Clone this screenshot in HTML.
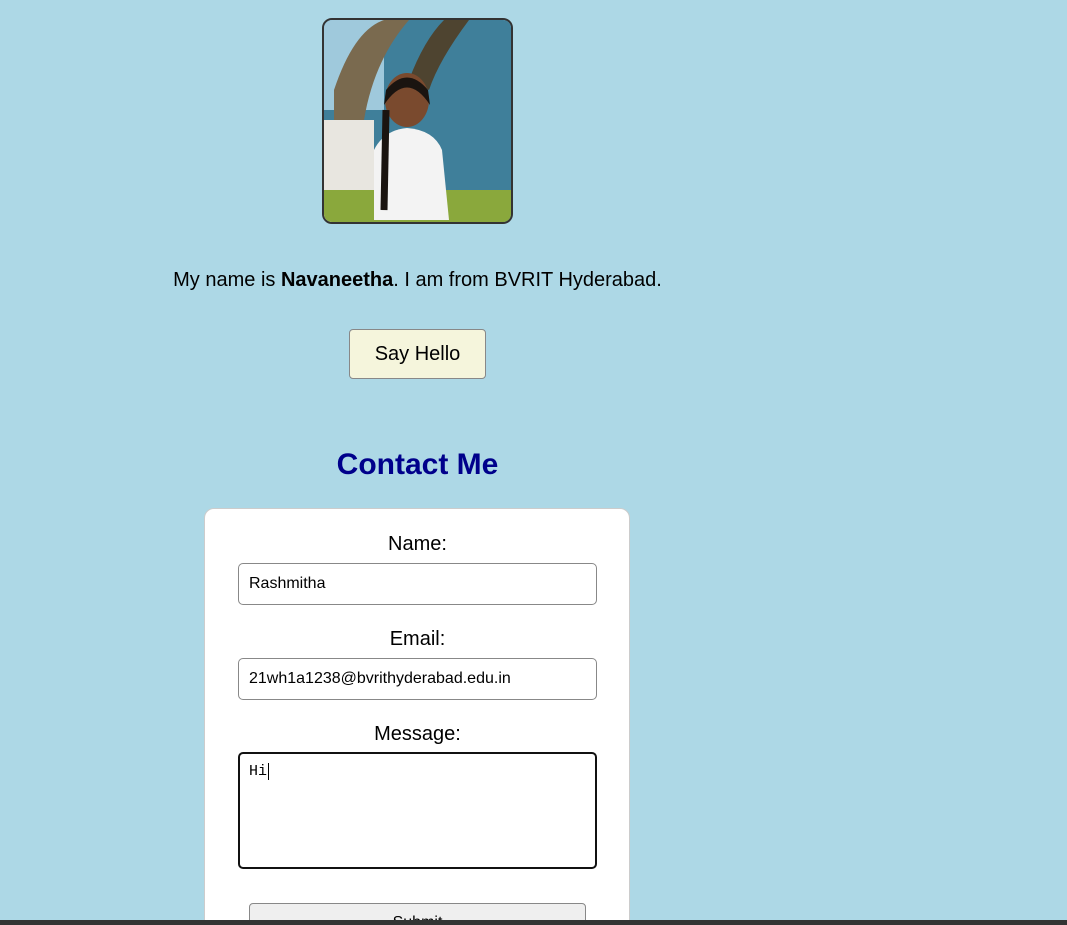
<!DOCTYPE html>
<html><head><meta charset="utf-8"><style>
html,body{margin:0;padding:0;width:1067px;height:925px;overflow:hidden;}
body{background:#add8e6;font-family:"Liberation Sans",Arial,sans-serif;position:relative;}
.photo{position:absolute;left:322px;top:18px;width:187px;height:202px;border:2px solid #333;border-radius:10px;overflow:hidden;}
.intro{position:absolute;left:0;width:835px;top:269px;text-align:center;font-size:20px;color:#000;}
.hello{position:absolute;left:349px;top:329px;width:137px;height:50px;box-sizing:border-box;background:#f5f5dc;border:1px solid #888;border-radius:4px;font-size:20px;text-align:center;line-height:48px;}
h2{position:absolute;left:0;width:835px;top:448px;margin:0;text-align:center;font-size:30px;color:#00008b;font-weight:bold;}
.card{position:absolute;left:204px;top:508px;width:426px;height:450px;background:#fff;border-radius:10px;border:1px solid #ccc;box-sizing:border-box;}
.lbl{position:absolute;left:0;width:425px;text-align:center;font-size:20px;}
.inp{position:absolute;left:33px;width:359px;height:42px;box-sizing:border-box;border:1px solid #888;border-radius:5px;font-size:16px;padding-left:10px;line-height:40px;}
.ta{position:absolute;left:33px;top:243px;width:359px;height:117px;box-sizing:border-box;border:2px solid #111;border-radius:5px;font-family:"Liberation Mono",monospace;font-size:15px;padding:9px 9px;}
.sub{position:absolute;left:44px;top:394px;width:337px;height:40px;box-sizing:border-box;background:#efefef;border:1px solid #888;border-radius:4px;text-align:center;font-size:16px;line-height:38px;}
.bar{position:absolute;left:0;top:920px;width:1067px;height:5px;background:#333;z-index:10;}
</style></head><body>
<div class="photo"><svg width="187" height="202" viewBox="0 0 187 202">
<rect width="187" height="202" fill="#3f7f9a"/>
<rect x="0" y="0" width="60" height="90" fill="#9fc9dc"/>
<path d="M10 202 L10 70 Q30 10 60 0 L85 0 Q50 40 40 100 L45 202Z" fill="#7a6a4f"/>
<path d="M85 60 Q100 20 120 0 L145 0 Q115 40 105 70Z" fill="#4e4430"/>
<rect x="0" y="100" width="50" height="102" fill="#e8e6e0"/>
<rect x="0" y="170" width="187" height="32" fill="#8aa83c"/>
<ellipse cx="83" cy="80" rx="22" ry="27" fill="#7a4a2e"/>
<path d="M60 85 Q83 50 106 85 L104 70 Q83 45 62 70Z" fill="#1a1410"/>
<path d="M50 200 L50 130 Q60 110 83 108 Q110 110 118 130 L125 200Z" fill="#f3f3f3"/>
<path d="M62 90 L60 190" stroke="#1a1410" stroke-width="7"/>
</svg></div>
<div class="intro">My name is <b>Navaneetha</b>. I am from BVRIT Hyderabad.</div>
<div class="hello">Say Hello</div>
<h2>Contact Me</h2>
<div class="card">
<div class="lbl" style="top:24px">Name:</div>
<div class="inp" style="top:54px">Rashmitha</div>
<div class="lbl" style="top:119px">Email:</div>
<div class="inp" style="top:149px">21wh1a1238@bvrithyderabad.edu.in</div>
<div class="lbl" style="top:214px">Message:</div>
<div class="ta">Hi<span style="border-left:1px solid #000;margin-left:1px"></span></div>
<div class="sub">Submit</div>
</div>
<div class="bar"></div>
</body></html>
